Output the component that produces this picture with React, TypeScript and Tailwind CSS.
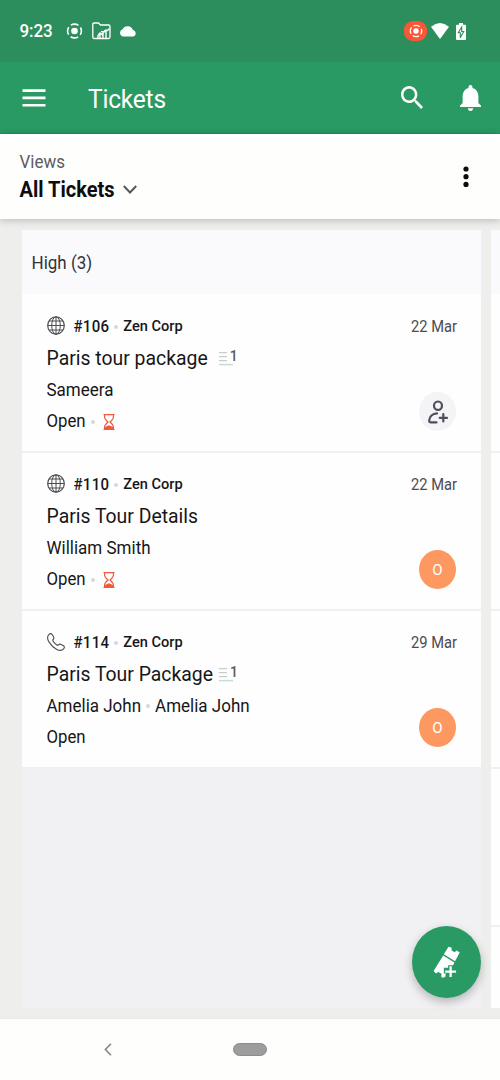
import type { ReactNode } from "react";

type Ticket = {
  id: string;
  source: "web" | "phone";
  company: string;
  date: string;
  title: string;
  contacts: string[];
  status: string;
  overdue?: boolean;
  threads?: number;
  assignee?: string;
};

const tickets: Ticket[] = [
  {
    id: "#106",
    source: "web",
    company: "Zen Corp",
    date: "22 Mar",
    title: "Paris tour package",
    contacts: ["Sameera"],
    status: "Open",
    overdue: true,
    threads: 1,
  },
  {
    id: "#110",
    source: "web",
    company: "Zen Corp",
    date: "22 Mar",
    title: "Paris Tour Details",
    contacts: ["William Smith"],
    status: "Open",
    overdue: true,
    assignee: "O",
  },
  {
    id: "#114",
    source: "phone",
    company: "Zen Corp",
    date: "29 Mar",
    title: "Paris Tour Package",
    contacts: ["Amelia John", "Amelia John"],
    status: "Open",
    threads: 1,
    assignee: "O",
  },
];

function RecordIcon({ className }: { className: string }) {
  return (
    <svg viewBox="0 0 18 18" className={className} fill="none" stroke="white">
      <circle cx="9" cy="9" r="3.5" fill="white" stroke="none" />
      <circle
        cx="9"
        cy="9"
        r="7.3"
        strokeWidth="1.7"
        strokeDasharray="8.47 3"
        strokeDashoffset="4.23"
      />
    </svg>
  );
}

function StatusBar() {
  return (
    <div className="flex h-[62px] items-center bg-[#2b8e5c] pl-[19.5px] pr-[34px] text-white">
      <span className="mt-0.5 scale-y-[1.04] text-[17px] font-medium tracking-[-0.1px]">9:23</span>
      <RecordIcon className="ml-[13.5px] h-[18px] w-[17px]" />
      <svg viewBox="0 0 19 18" className="ml-[9px] h-[18px] w-[19px]" fill="none" stroke="white" strokeWidth="1.3">
        <path d="M4.5 16.5H2.3Q.8 16.5.8 15V2.3Q.8 1 2.1 1H6.5L8.5 3H16.5Q18 3 18 4.5V15Q18 16.5 16.5 16.5Z" />
        <path d="M6 16V13.5L8 11L10 12.5L13 8.5L15.5 8.5L17.5 6.5M8 16V11M11 16V11M14 16V9M9 9.5L12 10L14.5 7.5" strokeWidth="1.4" />
      </svg>
      <svg viewBox="0 0 18 11" className="ml-2 h-[11px] w-[18px]" fill="white">
        <path d="M4 10.5A3.8 3.8 0 0 1 3.6 3.2A5.6 5.6 0 0 1 13.9 4.1A3.3 3.3 0 0 1 14.4 10.5Z" />
      </svg>
      <div className="ml-auto flex h-5 w-[23px] items-center justify-center rounded-[9px] bg-[#fb5736]">
        <RecordIcon className="h-[14px] w-[14px]" />
      </div>
      <svg viewBox="0 0 18 16" className="ml-[4px] h-4 w-[18px]" fill="white">
        <path d="M0 3.7Q9-3.7 18 3.7L9 16Z" />
      </svg>
      <svg viewBox="0 0 10 17" className="ml-[7px] h-[17px] w-[10px]">
        <path d="M3 0H7V1.8H9Q10 1.8 10 2.8V16Q10 17 9 17H1Q0 17 0 16V2.8Q0 1.8 1 1.8H3Z" fill="white" />
        <path d="M5.7 4L2.3 9.8H4.3V14.8L7.7 8.5H5.7Z" fill="white" stroke="#2b8e5c" strokeWidth="1.1" />
      </svg>
    </div>
  );
}

function AppBar() {
  return (
    <div className="flex h-[72px] items-center border-b border-[#2c8f60] bg-[#2a9a64] pl-[22px] pr-[19px] text-white">
      <svg viewBox="0 0 24 18" className="h-[18px] w-6" fill="white">
        <path d="M.5 .3H23.5V3H.5ZM.5 7.6H23.5V10.3H.5ZM.5 14.9H23.5V17.6H.5Z" />
      </svg>
      <h1 className="ml-[42px] mt-[4px] scale-y-[1.06] text-[24.5px] leading-8 tracking-[-0.2px]">Tickets</h1>
      <svg viewBox="3 3 17.5 17.5" preserveAspectRatio="none" className="ml-auto h-[23px] w-[22px]" fill="white">
        <path d="M15.5 14h-.79l-.28-.27C15.41 12.59 16 11.11 16 9.5 16 5.91 13.09 3 9.5 3S3 5.91 3 9.5 5.91 16 9.5 16c1.61 0 3.09-.59 4.23-1.57l.27.28v.79l5 4.99L20.49 19l-4.99-5zm-6 0C7.01 14 5 11.99 5 9.5S7.01 5 9.5 5 14 7.01 14 9.5 11.99 14 9.5 14z" />
      </svg>
      <svg viewBox="4 2.5 16 19.5" preserveAspectRatio="none" className="ml-[37px] mt-px h-[26px] w-[21px]" fill="white">
        <path d="M12 22c1.1 0 2-.9 2-2h-4c0 1.1.89 2 2 2zm6-6v-5c0-3.07-1.64-5.64-4.5-6.32V4c0-.83-.67-1.5-1.5-1.5s-1.5.67-1.5 1.5v.68C7.63 5.36 6 7.92 6 11v5l-2 2v1h16v-1l-2-2z" />
      </svg>
    </div>
  );
}

function ViewPicker() {
  return (
    <div className="relative z-10 flex h-[85px] items-center justify-between bg-[#fefefd] pl-[19.5px] pr-[31px] shadow-[0_1px_8px_rgba(0,0,0,0.24)]">
      <div>
        <div className="-mt-px scale-y-[1.06] text-[17px] leading-[27px] text-[#5c5c5f]">Views</div>
        <div className="flex items-center">
          <span className="scale-y-[1.06] text-[20px] font-bold leading-[28px] tracking-[0.01px] text-[#0d0d0f]">
            All Tickets
          </span>
          <svg viewBox="0 0 14 9" className="ml-2 h-[9px] w-[14px]" fill="none" stroke="#58585c" strokeWidth="2">
            <path d="M.8 1L7 7.5L13.2 1" />
          </svg>
        </div>
      </div>
      <svg viewBox="0 0 6 22" className="h-[22px] w-1.5" fill="#0c0c0e">
        <circle cx="3" cy="3" r="2.6" />
        <circle cx="3" cy="10.7" r="2.6" />
        <circle cx="3" cy="18.4" r="2.6" />
      </svg>
    </div>
  );
}

function Dot({ className }: { className?: string }) {
  return <span className={`size-1 shrink-0 rounded-full bg-[#d6d7d9] ${className ?? ""}`} />;
}

function SourceIcon({ source }: { source: Ticket["source"] }) {
  if (source === "phone") {
    return (
      <svg viewBox="0 0 18 18" className="-mt-0.5 h-[18px] w-[18px]" fill="none" stroke="#4d4e52" strokeWidth="1.1" strokeLinejoin="round">
        <path d="M2 1.4C3.2.3 4.6.3 5.4 1.7L6.6 3.9C7.2 5 6.9 5.7 6.1 6.5C5.5 7.1 5.7 7.7 6.4 8.7C7.3 9.9 8.4 11 9.5 11.7C10.3 12.2 10.9 12.4 11.5 11.8C12.3 10.9 13 10.9 14 11.4L16.2 12.6C17.6 13.4 17.7 14.7 16.6 15.9C14.9 17.7 12.4 17.8 9.8 16.4C6.9 14.9 3.7 11.8 1.9 8.9C.3 6.1.2 3.2 2 1.4Z" />
      </svg>
    );
  }
  return (
    <svg viewBox="0 0 18 19" className="-mt-[3px] h-[19px] w-[18px]" fill="none" stroke="#4d4e52" strokeWidth="1">
      <ellipse cx="9" cy="9.5" rx="8.3" ry="8.7" strokeWidth="1.2" />
      <ellipse cx="9" cy="9.5" rx="4.3" ry="8.7" />
      <path d="M9 .8V18.2M.7 9.5H17.3M1.8 5H16.2M1.8 14H16.2" />
    </svg>
  );
}

function ThreadCount({ count }: { count: number }) {
  return (
    <span className="flex h-4 items-start">
      <svg viewBox="0 0 14 15" className="h-[15px] w-[14px]" fill="none" stroke="#c9ccce" strokeWidth="1.3">
        <path d="M0 1.7H8M0 5.7H8M0 9.7H8" />
        <path d="M0 13.6H14" stroke="#c8dcd5" strokeWidth="1.5" />
      </svg>
      <span className="-ml-[3px] -mt-px text-[14px] font-medium leading-[13px] text-[#5a5b5e]">{count}</span>
    </span>
  );
}

function Hourglass() {
  return (
    <svg viewBox="0 0 12 16" className="ml-[8.5px] h-4 w-3" fill="none" stroke="#f2583a" strokeWidth="1.2">
      <path d="M.5.7H11.5M.5 15.3H11.5M1.6.7V3.2Q1.6 4.8 5 8Q1.6 11.2 1.6 12.8V15.3M10.4.7V3.2Q10.4 4.8 7 8Q10.4 11.2 10.4 12.8V15.3" />
      <path d="M2 15V13.7L6 12L10 13.7V15Z" fill="#f2583a" />
    </svg>
  );
}

function Assignee({ name }: { name?: string }) {
  if (name) {
    return (
      <span className="flex h-[39px] w-[37px] items-center justify-center rounded-[50%] bg-[#fd9860] pt-px text-[15px] text-white">
        {name}
      </span>
    );
  }
  return (
    <span className="flex h-[39px] w-[37px] items-center justify-center rounded-[50%] bg-[#f4f4f6]">
      <svg viewBox="0 0 20 24" className="h-6 w-5" fill="none" stroke="#4c4e5c" strokeWidth="2.2" strokeLinecap="round" strokeLinejoin="round">
        <ellipse cx="10" cy="5.7" rx="4" ry="4.2" />
        <path d="M9 13.4C4.5 13.6 1.5 16.5 1.2 20.5Q1.1 22.4 3 22.4H8.5M15.3 14V21.5M11.7 17.8H19" />
      </svg>
    </span>
  );
}

function Row({ children }: { children: ReactNode }) {
  return <div className="flex h-[31.5px] items-center whitespace-nowrap">{children}</div>;
}

function TicketCard({ ticket }: { ticket: Ticket }) {
  return (
    <div className="relative h-[158px] border-b-2 border-[#f0f0f2] bg-[#fefefe] pl-[24.5px] pr-6 pt-[16.5px] text-[#161618]">
      <Row>
        <SourceIcon source={ticket.source} />
        <span className="ml-[9px] scale-y-[1.05] text-[15px] font-medium tracking-[0.3px]">{ticket.id}</span>
        <Dot className="mx-[5px]" />
        <span className="scale-y-[1.06] text-[14.6px] font-medium">{ticket.company}</span>
        <span className="ml-auto scale-y-[1.07] text-[14.7px] text-[#4c4c50]">{ticket.date}</span>
      </Row>
      <Row>
        <span className="scale-y-[1.07] text-[19.4px]">{ticket.title}</span>
        {ticket.threads && (
          <span className={ticket.source === "web" ? "ml-[11px]" : "ml-1.5"}>
            <ThreadCount count={ticket.threads} />
          </span>
        )}
      </Row>
      <Row>
        {ticket.contacts.map((name, i) => (
          <span key={i} className="flex items-center text-[17px]">
            {i > 0 && <Dot className="mx-[5px]" />}
            <span className="scale-y-[1.06]">{name}</span>
          </span>
        ))}
      </Row>
      <Row>
        <span className="scale-y-[1.06] text-[16.8px]">{ticket.status}</span>
        {ticket.overdue && (
          <>
            <Dot className="ml-[5px]" />
            <Hourglass />
          </>
        )}
      </Row>
      <div className="absolute bottom-5 right-[25px]">
        <Assignee name={ticket.assignee} />
      </div>
    </div>
  );
}

function Board() {
  return (
    <div className="flex h-[800px] gap-2.5 overflow-hidden border-b border-[#e8e8ec] bg-[#eeeeec] pb-2.5 pl-[22px] pt-[11px]">
      <div className="w-[459px] shrink-0 bg-[#f1f1f4]">
        <div className="flex h-16 items-center bg-[#fafafd] pl-[9.5px] pt-[3px] text-[17px] text-[#333336]">
          <span className="scale-y-[1.06]">High ({tickets.length})</span>
        </div>
        <div className="bg-[#fefefe] pt-px">
          {tickets.map((ticket) => (
            <TicketCard key={ticket.id} ticket={ticket} />
          ))}
        </div>
      </div>
      <div className="w-[459px] shrink-0 bg-[#fefefe]">
        <div className="mb-px h-16 bg-[#fafafd]" />
        {[0, 1, 2, 3].map((i) => (
          <div key={i} className="h-[158px] border-b-2 border-[#f0f0f2]" />
        ))}
      </div>
    </div>
  );
}

function AddTicketButton() {
  return (
    <button className="absolute left-[412px] top-[926px] z-20 flex h-[72px] w-[69px] items-center justify-center rounded-[50%] bg-[#2a9a64] shadow-[0_4px_10px_rgba(0,0,0,0.25)]">
      <svg viewBox="0 0 80 100" className="mt-px h-[33px] w-[27px]" fill="#fefefe">
        <path d="M46 2L56 5L55 13L64 19L71 14L80 20L66 46L32 25Z" />
        <path d="M30 29L64 50L60 58H45V66H32V83H38L36 94L28 96L24 93L25 84L15 79L8 83L1 76Z" />
        <path d="M49 61H56V74H69V81H56V94H49V81H36V74H49Z" />
      </svg>
    </button>
  );
}

function NavBar() {
  return (
    <div className="flex h-[61px] items-center bg-[#fefefd]">
      <svg viewBox="0 0 8 13" className="ml-[104px] h-[13px] w-2" fill="none" stroke="#858585" strokeWidth="1.6">
        <path d="M7 .7L1.4 6.5L7 12.3" />
      </svg>
      <span className="ml-[121px] h-[13px] w-[34px] rounded-full border border-[#8c8c8c] bg-[#9d9d9d]" />
    </div>
  );
}

export default function App() {
  return (
    <div className="relative h-[1080px] w-[500px] overflow-hidden bg-[#fefefd] font-['Roboto',sans-serif]">
      <StatusBar />
      <AppBar />
      <ViewPicker />
      <Board />
      <AddTicketButton />
      <NavBar />
    </div>
  );
}
